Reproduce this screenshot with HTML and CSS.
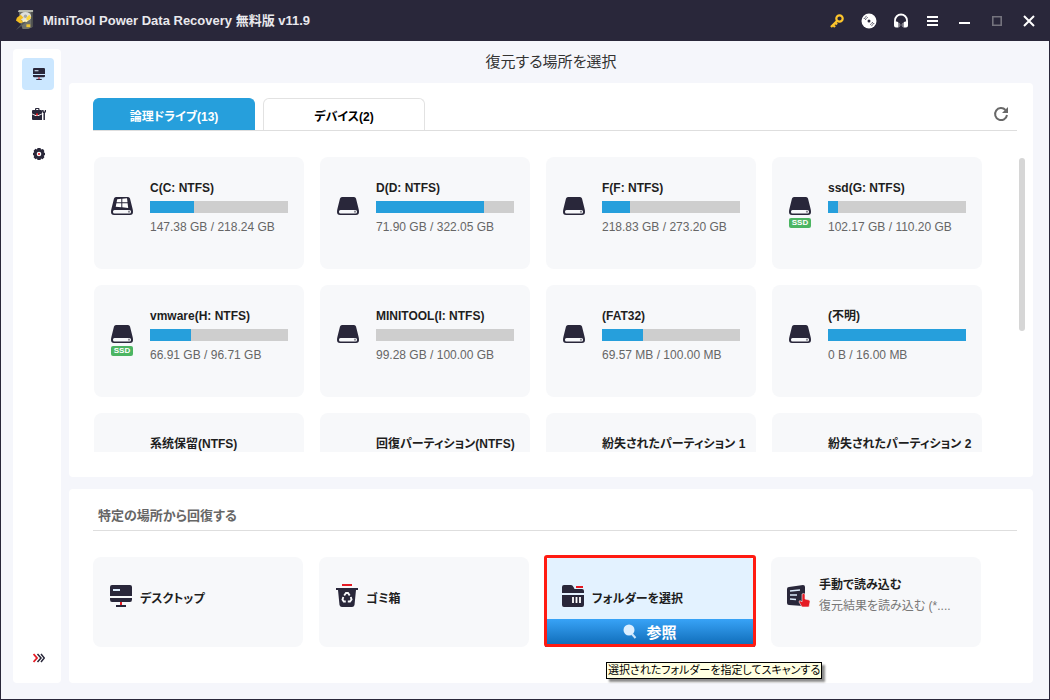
FILE: index.html
```html
<!DOCTYPE html>
<html lang="ja">
<head>
<meta charset="utf-8">
<meta name="viewport" content="width=device-width, initial-scale=1">
<title>MiniTool Power Data Recovery</title>
<link rel="stylesheet" href="styles.css">
</head>
<body>
<svg class="sprite" aria-hidden="true">
  <symbol id="drive" viewBox="0 0 22 18">
    <path d="M5 0h12q1.500 0 2 1.500L21.500 11.500Q22 13 22 15 22 18 19 18H3Q0 18 0 15 0 13 .5 11.500L3 1.500Q3.500 0 5 0Z" fill="#29273a"/>
    <rect x="2" y="13" width="18" height="3.500" rx="1.500" fill="#f7f8fa"/>
    <circle cx="18" cy="14.700" r="1.100" fill="#8b8a94"/>
  </symbol>
  <symbol id="drive-win" viewBox="0 0 22 18">
    <use href="#drive"/>
    <path d="M6.200 2.300 10.300 1.800V5.300H5.600ZM11.300 1.700 16 1.200 16.500 5.300H11.300ZM5.400 6.300H10.300V10.200L4.700 9.800ZM11.300 6.300H16.600L17.200 10.900 11.300 10.300Z" fill="#fff"/>
  </symbol>
  <symbol id="monitor" viewBox="0 0 22 22">
    <path d="M2 0H20Q22 0 22 2V11H0V2Q0 0 2 0ZM0 13H22V14.500Q22 17 20 17H2Q0 17 0 14.500Z" fill="#29273a"/>
    <path d="M3 4H10V6H3Z" fill="#dcebfb"/>
    <path d="M10 17H12V20H10Z" fill="#e51b24"/>
    <path d="M6 20H16V22H6Z" fill="#29273a"/>
  </symbol>
</svg>
<div class="window">
  <header class="titlebar">
    <svg class="logo" viewBox="0 0 20 22" aria-hidden="true">
      <path d="M4 1H19L18 18 14 20H8L5 12Z" fill="#6f726b"/>
      <path d="M4 0H19V2H3Z" fill="#b9bbb0"/>
      <path d="M17 2H19V18H17Z" fill="#4e504e"/>
      <ellipse cx="11" cy="7" rx="6" ry="5" fill="#dfe0da"/>
      <circle cx="11" cy="6.500" r="1.800" fill="#a5a7a4"/>
      <path d="M2 8 6 5 9 8 6 10 9 13 5 14 1 11Z" fill="#f3bd20"/>
      <path d="M12 8 15 5 17 8 15 10 12 12Z" fill="#ffd83a"/>
      <path d="M1 21 9 12 11 13 4 19Z" fill="#565b59"/>
      <path d="M8 12Q11 10 13 12" fill="none" stroke="#fff4bd" stroke-width="2"/>
      <path d="M12 15H16V18H12Z" fill="#f0c632"/>
    </svg>
    <h1 class="app-name">MiniTool Power Data Recovery 無料版 v11.9</h1>
    <div class="title-actions">
      <button class="title-btn" aria-label="登録"><svg width="14" height="14" viewBox="0 0 14 14"><circle cx="9.500" cy="4.500" r="3.200" fill="none" stroke="#fdc52c" stroke-width="2.200"/><path d="M7.500 6.500 1 13M2.500 10.500 5 13M5 8.500 7 10.500" fill="none" stroke="#fdc52c" stroke-width="2.400"/></svg></button>
      <button class="title-btn" aria-label="ブータブルメディア"><svg width="16" height="16" viewBox="0 0 16 16"><circle cx="8" cy="8" r="7.500" fill="#fff"/><circle cx="8" cy="8" r="1.500" fill="#29273a"/><path d="M3 6Q4 4 6 3M4.500 6.800Q5 5 6.700 4.500M13 10Q12 12 10 13M11.500 9.200Q11 11 9.300 11.500" fill="none" stroke="#29273a" stroke-width="1" stroke-dasharray="1.500 .7"/></svg></button>
      <button class="title-btn" aria-label="サポート"><svg width="16" height="16" viewBox="0 0 16 16"><path d="M2 9V7.500A6 6 0 0 1 14 7.500V9" fill="none" stroke="#fff" stroke-width="1.800"/><path d="M1 8.500H3.500Q5.500 8.500 5.500 10V14.500H3Q1 14.500 1 12.500ZM15 8.500H12.500Q10.500 8.500 10.500 10V14.500H13Q15 14.500 15 12.500Z" fill="#fff"/><path d="M6.500 10V14M8 11V13M9.500 10V14" stroke="#77757f" stroke-width="1"/></svg></button>
      <button class="title-btn" aria-label="メニュー"><svg width="12" height="12" viewBox="0 0 12 12"><path d="M0 2H11M0 6H11M0 10H11" stroke="#fff" stroke-width="2"/></svg></button>
      <button class="title-btn" aria-label="最小化"><svg width="12" height="12" viewBox="0 0 12 12"><path d="M0 8H11" stroke="#fff" stroke-width="2"/></svg></button>
      <button class="title-btn" aria-label="最大化" disabled><svg width="10" height="10" viewBox="0 0 10 10"><path d="M.8.8H9.200V9.200H.8Z" fill="none" stroke="#74737d" stroke-width="1.600"/></svg></button>
      <button class="title-btn" aria-label="閉じる"><svg width="12" height="12" viewBox="0 0 12 12"><path d="M1 1 11 11M11 1 1 11" stroke="#fff" stroke-width="2"/></svg></button>
    </div>
  </header>
  <div class="workspace">
    <nav class="sidebar">
      <button class="nav-btn nav-current" aria-label="復元"><svg width="12" height="12" viewBox="0 0 22 22"><use href="#monitor"/></svg></button>
      <button class="nav-btn" aria-label="ツール"><svg width="14" height="12" viewBox="0 0 14 12"><path d="M3 2V1Q3 0 4 0H6.500Q7.500 0 7.500 1V2H9Q10 2 10 3V5.500L6.500 7H3.500L0 5.500V3Q0 2 1 2ZM4.200 1V2H6.300V1ZM0 6.300 3.500 8H6.500L10 6.300V12H1Q0 12 0 11Z" fill="#29273a" fill-rule="evenodd"/><path d="M4 5.500H6V7.500H4Z" fill="#e51b24"/><path d="M10.800 2Q10.800 4.500 12.200 4.500T13.600 2M12.200 4.500V12" fill="none" stroke="#29273a" stroke-width="1.500"/></svg></button>
      <button class="nav-btn" aria-label="設定"><svg width="12" height="12" viewBox="0 0 12 12"><path d="M4.500 0H7.500L8 1.400 10 .9 11.400 3 10.800 4.200 12 4.900V7.100L10.800 7.800 11.400 9.300 9.500 11.200 8 10.600 7.500 12H4.500L4 10.600 2.500 11.200.6 9.300 1.200 7.800 0 7.100V4.900L1.200 4.200.6 2.700 2.500.8 4 1.400Z" fill="#29273a"/><circle cx="6" cy="6" r="2.300" fill="#fff"/><circle cx="6" cy="6" r="1.100" fill="#e51b24"/></svg></button>
      <button class="nav-btn nav-expand" aria-label="展開"><svg width="12" height="10" viewBox="0 0 12 10"><path d="M.5 1 4 5 .5 9" fill="none" stroke="#e51b24" stroke-width="1.800"/><path d="M4.500 1 8 5 4.500 9M8 1 11.300 5 8 9" fill="none" stroke="#29273a" stroke-width="1.500"/></svg></button>
    </nav>
    <main class="content">
      <h2 class="page-title">復元する場所を選択</h2>
      <section class="panel drives-panel">
        <div class="tabs" role="tablist">
          <button class="tab tab-active" role="tab" aria-selected="true">論理ドライブ(13)</button>
          <button class="tab" role="tab" aria-selected="false">デバイス(2)</button>
          <button class="refresh" aria-label="更新"><svg width="16" height="16" viewBox="0 0 16 16"><path d="M12.500 4A6 6 0 1 0 14 9" fill="none" stroke="#686868" stroke-width="2"/><path d="M15 1V7H9Z" fill="#686868"/></svg></button>
        </div>
        <div class="drive-area">
          <div class="drive-grid">
            <article class="drive"><div class="drive-icon"><svg width="22" height="18"><use href="#drive-win"/></svg></div><div class="drive-info"><h3 class="drive-name">C(C: NTFS)</h3><div class="usage"><div class="used" style="width:32%"></div></div><p class="size">147.38 GB / 218.24 GB</p></div></article>
            <article class="drive"><div class="drive-icon"><svg width="22" height="18"><use href="#drive"/></svg></div><div class="drive-info"><h3 class="drive-name">D(D: NTFS)</h3><div class="usage"><div class="used" style="width:78%"></div></div><p class="size">71.90 GB / 322.05 GB</p></div></article>
            <article class="drive"><div class="drive-icon"><svg width="22" height="18"><use href="#drive"/></svg></div><div class="drive-info"><h3 class="drive-name">F(F: NTFS)</h3><div class="usage"><div class="used" style="width:20%"></div></div><p class="size">218.83 GB / 273.20 GB</p></div></article>
            <article class="drive"><div class="drive-icon"><svg width="22" height="18"><use href="#drive"/></svg><span class="ssd">SSD</span></div><div class="drive-info"><h3 class="drive-name">ssd(G: NTFS)</h3><div class="usage"><div class="used" style="width:7%"></div></div><p class="size">102.17 GB / 110.20 GB</p></div></article>
            <article class="drive"><div class="drive-icon"><svg width="22" height="18"><use href="#drive"/></svg><span class="ssd">SSD</span></div><div class="drive-info"><h3 class="drive-name">vmware(H: NTFS)</h3><div class="usage"><div class="used" style="width:30%"></div></div><p class="size">66.91 GB / 96.71 GB</p></div></article>
            <article class="drive"><div class="drive-icon"><svg width="22" height="18"><use href="#drive"/></svg></div><div class="drive-info"><h3 class="drive-name">MINITOOL(I: NTFS)</h3><div class="usage"><div class="used" style="width:0%"></div></div><p class="size">99.28 GB / 100.00 GB</p></div></article>
            <article class="drive"><div class="drive-icon"><svg width="22" height="18"><use href="#drive"/></svg></div><div class="drive-info"><h3 class="drive-name">(FAT32)</h3><div class="usage"><div class="used" style="width:30%"></div></div><p class="size">69.57 MB / 100.00 MB</p></div></article>
            <article class="drive"><div class="drive-icon"><svg width="22" height="18"><use href="#drive"/></svg></div><div class="drive-info"><h3 class="drive-name">(不明)</h3><div class="usage"><div class="used" style="width:100%"></div></div><p class="size">0 B / 16.00 MB</p></div></article>
            <article class="drive"><div class="drive-icon"></div><div class="drive-info"><h3 class="drive-name">系统保留(NTFS)</h3></div></article>
            <article class="drive"><div class="drive-icon"></div><div class="drive-info"><h3 class="drive-name">回復パーティション(NTFS)</h3></div></article>
            <article class="drive"><div class="drive-icon"></div><div class="drive-info"><h3 class="drive-name">紛失されたパーティション 1</h3></div></article>
            <article class="drive"><div class="drive-icon"></div><div class="drive-info"><h3 class="drive-name">紛失されたパーティション 2</h3></div></article>
          </div>
          <div class="scrollbar"><div class="thumb"></div></div>
        </div>
      </section>
      <section class="panel places-panel">
        <h2 class="places-title">特定の場所から回復する</h2>
        <div class="places">
          <button class="place"><span class="place-main"><svg width="22" height="22"><use href="#monitor"/></svg><span class="place-name">デスクトップ</span></span></button>
          <button class="place"><span class="place-main"><svg width="22" height="24" viewBox="0 0 22 24"><path d="M6 0H16V2H6Z" fill="#e51b24"/><path d="M0 4H22V6H20L18.500 21Q18 23 16 23H6Q4 23 3.500 21L2 6H0Z" fill="#29273a"/><path d="M8.200 11.500 10 9H12L13.700 11.500M14.800 13 15.500 15.500 14 17.500H11.800M9.800 17.500H7.800L6.500 15.500 7.300 13" fill="none" stroke="#f7f8fa" stroke-width="1.900"/></svg><span class="place-name">ゴミ箱</span></span></button>
          <button class="place place-hover">
            <span class="place-main"><svg width="22" height="22" viewBox="0 0 22 22"><path d="M2 0H9Q10.500 0 11.500 2L12.500 4H20Q22 4 22 6V8H0V2Q0 0 2 0ZM0 10H22V20Q22 22 20 22H2Q0 22 0 20Z" fill="#29273a"/><path d="M14 1H21V3H14Z" fill="#e51b24"/><path d="M11 12V18M14.500 12V18M18 12V18" stroke="#fff" stroke-width="1.800"/></svg><span class="place-name">フォルダーを選択</span></span>
            <span class="browse"><svg width="14" height="15" viewBox="0 0 14 15"><circle cx="6" cy="6" r="5.500" fill="#dcefff"/><path d="M9 10 12.500 14" stroke="#cbe5fb" stroke-width="2"/></svg>参照</span>
            <span class="tooltip" role="tooltip">選択されたフォルダーを指定してスキャンする</span>
          </button>
          <button class="place"><span class="place-main place-detailed"><svg width="24" height="23" viewBox="0 0 24 23"><path d="M2 2 16 0Q18 0 18 2V19Q18 21 16 21L2 20Q0 20 0 18V4Q0 2 2 2Z" fill="#29273a"/><path d="M3 6 13 5M3 10H10M3 14 9 14.500" stroke="#dcebfb" stroke-width="1.600"/><path d="M15 9Q16.500 8 18 9V14L22 15Q23.500 15.500 23 17L22 22H15L12 17Q12 15 14 16L15 17Z" fill="#e51b24" stroke="#f7f8fa" stroke-width=".6"/></svg><span class="place-text"><span class="place-name">手動で読み込む</span><span class="place-note">復元結果を読み込む (*....</span></span></span></button>
        </div>
      </section>
    </main>
  </div>
</div>
</body>
</html>
```

FILE: styles.css
```css
* { box-sizing: border-box; }
body {
  margin: 0;
  font-family: "Liberation Sans", "Noto Sans CJK JP", sans-serif;
  font-size: 12px;
  font-feature-settings: "palt";
  color: #1e1e1e;
}
h1, h2, h3, p { margin: 0; }
button {
  font: inherit;
  font-feature-settings: inherit;
  color: inherit;
  border: 0;
  padding: 0;
  background: none;
}
svg { display: block; flex: none; }
.sprite { position: absolute; width: 0; height: 0; }
.window {
  display: flex;
  flex-direction: column;
  height: 100vh;
  border: 1px solid #29273a;
  border-top: 0;
  background: #f5f6fb;
}
.titlebar {
  display: flex;
  align-items: center;
  flex: none;
  height: 41px;
  padding: 0 4px 0 14px;
  background: #29273a;
  color: #e9e9ed;
}
.logo { width: 19px; height: 21px; margin-right: 9px; }
.app-name { font-size: 13px; line-height: 20px; font-weight: bold; }
.title-actions { display: flex; margin-left: auto; }
.title-btn { display: grid; place-items: center; width: 32px; height: 32px; }
.workspace {
  display: flex;
  flex: 1;
  min-height: 0;
  gap: 8px;
  padding: 0 16px 16px 12px;
}
.sidebar {
  display: flex;
  flex-direction: column;
  flex: none;
  gap: 8px;
  width: 48px;
  margin-top: 8px;
  padding: 9px 7px 9px 9px;
  border-radius: 4px;
  background: #fff;
}
.nav-btn {
  display: grid;
  place-items: center;
  width: 32px;
  height: 32px;
  padding-left: 2px;
  border-radius: 4px;
}
.nav-current { background: #cbe7ff; }
.nav-expand { margin-top: auto; }
.content { display: flex; flex-direction: column; flex: 1; min-width: 0; }
.page-title {
  flex: none;
  height: 42px;
  color: #333;
  font-size: 15px;
  line-height: 42px;
  font-weight: normal;
  text-align: center;
}
.panel { border-radius: 4px; background: #fff; }
.drives-panel {
  display: flex;
  flex-direction: column;
  flex: 1;
  min-height: 0;
  padding: 15px 8px 25px 24px;
}
.tabs {
  display: flex;
  flex: none;
  gap: 8px;
  margin-right: 8px;
  border-bottom: 1px solid #dedede;
}
.tab {
  width: 162px;
  height: 32px;
  padding-top: 2px;
  border: 1px solid #e2e2e2;
  border-bottom: 0;
  border-radius: 6px 6px 0 0;
  background: #fff;
  color: #000;
  font-size: 12px;
  font-weight: bold;
}
.tab-active { border-color: #269fdc; background: #269fdc; color: #fff; }
.refresh { display: grid; place-items: center; width: 32px; height: 32px; margin-left: auto; }
.drive-area {
  display: flex;
  justify-content: space-between;
  flex: 1;
  gap: 37px;
  min-height: 0;
  margin-top: 26px;
  padding-left: 1px;
}
.drive-grid {
  display: grid;
  grid-template-columns: repeat(4, minmax(0, 1fr));
  grid-auto-rows: 112px;
  gap: 16px;
  flex: 1;
  overflow: hidden;
}
.drive {
  display: flex;
  padding: 22px 16px 0 17px;
  border-radius: 8px;
  background: #f7f8fa;
}
.drive-icon { flex: none; width: 22px; margin: 18px 17px 0 0; }
.ssd {
  display: block;
  margin-top: 3px;
  border-radius: 2px;
  background: #4cb562;
  color: #fff;
  font-size: 8px;
  line-height: 10px;
  font-weight: bold;
  text-align: center;
}
.drive-info { flex: 1; min-width: 0; }
.drive-name {
  height: 22px;
  font-size: 12px;
  line-height: 18px;
  font-weight: bold;
  white-space: nowrap;
}
.usage { height: 12px; background: #cecece; }
.used { height: 100%; background: #269fdc; }
.size { margin-top: 5px; line-height: 18px; color: #666; white-space: nowrap; }
.scrollbar { flex: none; width: 6px; margin-top: 1px; }
.thumb { height: 59%; border-radius: 3px; background: #d6d6d6; }
.places-panel { flex: none; margin-top: 12px; padding: 12px 16px 36px 24px; }
.places-title {
  padding-left: 5px;
  border-bottom: 1px solid #dedede;
  color: #666;
  font-size: 13px;
  line-height: 29px;
  font-weight: bold;
}
.places {
  display: grid;
  grid-template-columns: repeat(4, minmax(0, 1fr));
  gap: 16px;
  margin: 26px 36px 0 0;
}
.place {
  position: relative;
  display: flex;
  flex-direction: column;
  height: 90px;
  border-radius: 8px;
  background: #f7f8fa;
  text-align: left;
}
.place-main { display: flex; align-items: center; gap: 8px; height: 78px; padding-left: 17px; }
.place-detailed { padding-left: 16px; }
.place-name { padding-top: 6px; font-size: 12px; line-height: 18px; font-weight: bold; white-space: nowrap; }
.place-text { display: flex; flex-direction: column; gap: 2px; }
.place-text .place-name { padding-top: 0; }
.place-note { color: #777; line-height: 20px; white-space: nowrap; }
.place-hover { background: #e3f2ff; }
.place-hover::after {
  content: "";
  position: absolute;
  inset: -2px -1px 0;
  border: 3px solid #ff1b12;
  border-radius: 3px;
}
.browse {
  display: flex;
  align-items: center;
  justify-content: center;
  align-self: stretch;
  gap: 9px;
  width: 100%;
  height: 28px;
  margin-top: auto;
  padding-bottom: 3px;
  background: linear-gradient(#38a3f7, #0d69b4);
  color: #fff;
  font-size: 15px;
  font-weight: bold;
}
.place-hover .place-main { height: 62px; padding-top: 16px; }
.tooltip {
  position: absolute;
  top: 105px;
  left: 61px;
  padding: 0 1px;
  border: 1px solid #000;
  background: #ffffe1;
  box-shadow: 3px 3px 2px rgba(0, 0, 0, .45);
  color: #000;
  font-size: 11px;
  line-height: 15px;
  white-space: nowrap;
}
```
